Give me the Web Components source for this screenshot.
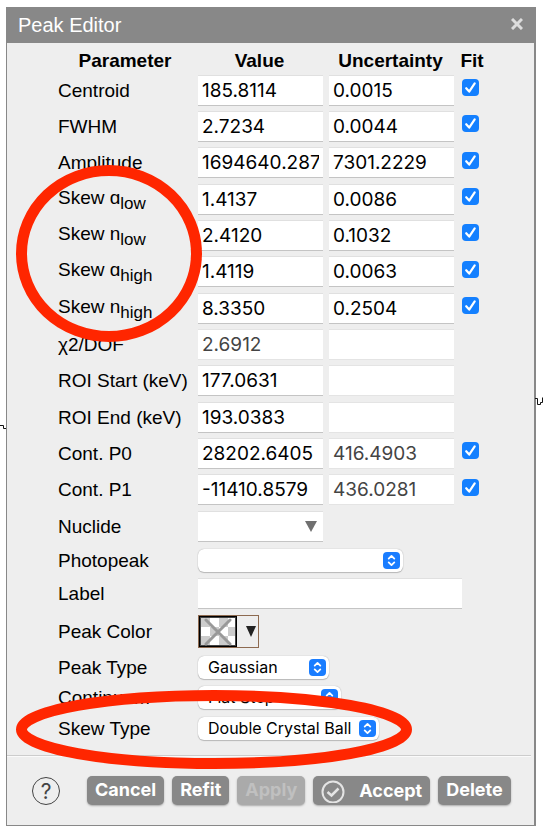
<!DOCTYPE html>
<html lang="en">
<head>
<meta charset="utf-8">
<title>Peak Editor</title>
<style>
  html, body { margin: 0; background: #fff; }
  body { font-family: "Liberation Sans", Arial, sans-serif; font-size: 19px; line-height: 24px; color: #000; }
</style>
</head>
<body>
<peak-page>
  <peak-window heading="Peak Editor">
    <peak-parameters></peak-parameters>
    <peak-combo label="Nuclide"></peak-combo>
    <peak-choice label="Photopeak" value="" style="--w:205px;--h:32px"></peak-choice>
    <peak-text label="Label"></peak-text>
    <peak-color label="Peak Color"></peak-color>
    <peak-choice label="Peak Type" value="Gaussian" style="--w:131px;--h:30px"></peak-choice>
    <peak-choice label="Continuum" value="Flat Step" style="--w:143px;--h:30px"></peak-choice>
    <peak-choice label="Skew Type" value="Double Crystal Ball" style="--w:181px;--h:32px"></peak-choice>
    <peak-actions slot="footer"></peak-actions>
  </peak-window>
</peak-page>

<script>
const define = (name, html, setup) => {
  const template = document.createElement('template');
  template.innerHTML = '<style>*{box-sizing:border-box}</style>' + html;
  customElements.define(name, class extends HTMLElement {
    constructor() {
      super();
      this.attachShadow({ mode: 'open' });
    }
    connectedCallback() {
      if (this.shadowRoot.childNodes.length) return;
      this.shadowRoot.append(template.content.cloneNode(true));
      if (setup) setup(this, this.shadowRoot);
    }
  });
};

const fieldCss = `
  .field { width: 100%; height: 31px; margin: 0; padding: 0 4px; display: block;
    border: 0; border-top: 1px solid #e0e0e0; border-bottom: 1px solid #c4c4c4; border-radius: 0;
    background: #fff; color: #000; font: 19px/26px Inter, "Liberation Sans", sans-serif; outline: none; }
  .field:focus-visible { box-shadow: 0 0 0 2px #1a7dff66; }
`;
const rowCss = `
  :host { display: grid; grid-template-columns: 140px minmax(0, 1fr); align-items: center; min-height: var(--h, 36px); }
  label { white-space: nowrap; padding-top: 1px; }
`;

/* Page: the spectrum trace behind the dialog, and the highlight rings over it */
define('peak-page', `
<style>
  :host { display: block; position: relative; padding: 7px 7px 9px 6px; }
  svg { position: absolute; pointer-events: none; overflow: visible; fill: none; }
  .left { left: 0; top: 420px; }
  .right { right: 0; top: 394px; }
  .trace { stroke: #111; stroke-width: 1; }
  .rings { left: 0; top: 0; stroke: #ff2600; stroke-width: 11; }
</style>
<svg class="trace left" width="7" height="12"><path d="M0 5.5H3.5V8.5H6"/></svg>
<svg class="trace right" width="8" height="14"><path d="M0 4.5H2.5V10.5H5.5V8.5H7.5V3.500"/></svg>
<slot></slot>
<svg class="rings" width="420" height="780" aria-hidden="true">
  <ellipse cx="109" cy="253.5" rx="87.5" ry="83"/>
  <ellipse cx="214" cy="729.5" rx="192.5" ry="34"/>
</svg>`);

define('peak-window', `
<style>
  :host { display: block; background: #eee; border: 1px solid #888; border-right-width: 2px; border-top: 0; }
  header { display: flex; align-items: center; justify-content: space-between; height: 36px;
    padding: 0 9px 2px 11px; background: #888; color: #fff; }
  h1 { margin: 0; padding-top: 2px; font-size: 20px; line-height: 24px; font-weight: 400; }
  button { border: 0; padding: 2px; background: none; display: flex; }
  svg { stroke: #ddd; stroke-width: 3; fill: none; }
  main { padding: 5px 50px 11px 51px; }
  footer { margin-right: 3px; border-top: 1px solid #ccc; box-shadow: inset 0 1px #fafafa; padding: 20px 16px 20px 25px; }
</style>
<header><h1></h1><button aria-label="Close"><svg width="12" height="12"><path d="M1 1L11 11M11 1L1 11"/></svg></button></header>
<main><slot></slot></main>
<footer><slot name="footer"></slot></footer>`,
(host, root) => { root.querySelector('h1').textContent = host.getAttribute('heading'); });

/* Fit parameters: [label, subscript, value, uncertainty, fitted, read-only columns] */
const parameters = [
  ['Centroid', '', '185.8114', '0.0015', true, ''],
  ['FWHM', '', '2.7234', '0.0044', true, ''],
  ['Amplitude', '', '1694640.2874', '7301.2229', true, ''],
  ['Skew ɑ', 'low', '1.4137', '0.0086', true, ''],
  ['Skew n', 'low', '2.4120', '0.1032', true, ''],
  ['Skew ɑ', 'high', '1.4119', '0.0063', true, ''],
  ['Skew n', 'high', '8.3350', '0.2504', true, ''],
  ['χ2/DOF', '', '2.6912', '', false, 'vu'],
  ['ROI Start (keV)', '', '177.0631', '', false, 'u'],
  ['ROI End (keV)', '', '193.0383', '', false, 'u'],
  ['Cont. P0', '', '28202.6405', '416.4903', true, 'u'],
  ['Cont. P1', '', '-11410.8579', '436.0281', true, 'u'],
];

define('peak-parameters', `
<style>
  ${fieldCss}
  :host { display: block; }
  table { width: 100%; table-layout: fixed; border-collapse: collapse; }
  th, td { padding: 0 6px 0 0; text-align: left; vertical-align: middle; font-weight: 400; white-space: nowrap; }
  tbody th { padding-top: 1px; }
  tbody .skew th { padding: 0 6px 3px 0; }
  thead th { height: 24px; padding: 1px 8px 0 0; line-height: 23px; font-weight: 700; text-align: center; }
  thead th:first-child { padding: 1px 6px 0 0; }
  thead th:last-child, td:last-child { padding-right: 0; }
  tbody tr { height: 36px; }
  tbody tr:nth-child(3n) { height: 37px; }
  .name { width: 140px; }
  .fit { width: 24px; }
  sub { font-size: 17px; line-height: 0; vertical-align: -5px; }
  .field[readonly] { color: #444; border-color: #e4e4e4; }
  .check { appearance: none; display: block; width: 17px; height: 17px; margin: 0 0 5px 2px; border-radius: 4px;
    background: #1480ff url('data:image/svg+xml,<svg xmlns="http://www.w3.org/2000/svg" viewBox="0 0 17 17"><path d="M4.200 9.200L7.200 12.600L12.700 4.300" fill="none" stroke="white" stroke-width="2.200" stroke-linecap="round" stroke-linejoin="round"/></svg>'); }
  .check:not(:checked) { background: #fff; border: 1px solid #bbb; }
</style>
<table>
  <colgroup><col class="name"><col><col><col class="fit"></colgroup>
  <thead><tr><th>Parameter</th><th>Value</th><th>Uncertainty</th><th>Fit</th></tr></thead>
  <tbody></tbody>
</table>`,
(host, root) => {
  root.querySelector('tbody').innerHTML = parameters.map(([name, sub, value, error, fit, locked], i) => `
    <tr class="${sub ? 'skew' : ''}">
      <th scope="row"><label for="v${i}">${name}${sub ? `<sub>${sub}</sub>` : ''}</label></th>
      <td><input class="field" id="v${i}" value="${value}" ${locked.includes('v') ? 'readonly' : ''}></td>
      <td><input class="field" aria-label="${name}${sub} uncertainty" value="${error}" ${locked.includes('u') ? 'readonly' : ''}></td>
      <td>${fit ? `<input class="check" type="checkbox" checked aria-label="Fit ${name}${sub}">` : ''}</td>
    </tr>`).join('');
});

const nameLabel = (host, root) => { root.querySelector('label').textContent = host.getAttribute('label'); };

define('peak-combo', `
<style>
  ${fieldCss}${rowCss}
  .box { display: grid; width: 125px; align-items: center; }
  .box > * { grid-area: 1 / 1; }
  svg { justify-self: end; margin-right: 6px; fill: #707070; }
</style>
<label for="c"></label>
<div class="box"><input class="field" id="c"><svg width="12" height="11"><path d="M0 0H12L6 11Z"/></svg></div>`, nameLabel);

define('peak-text', `
<style>
  ${fieldCss}${rowCss}
  :host { --h: 34px; }
  .field { max-width: 264px; }
</style>
<label for="t"></label><input class="field" id="t">`, nameLabel);

define('peak-choice', `
<style>
  ${rowCss}
  select { appearance: none; width: var(--w); height: 23px; margin: 0; padding: 0 24px 0 10px; border: 0; border-radius: 6px;
    box-shadow: 0 0 1px #999, 0 1px 1px #bbb; color: #000; font: 16px/22px Inter, "Liberation Sans", sans-serif;
    background: #fff url('data:image/svg+xml,<svg xmlns="http://www.w3.org/2000/svg" width="17" height="17"><rect width="17" height="17" rx="4" fill="%231a7dff"/><path d="M5.700 6.600L8.500 3.900L11.300 6.600M5.700 10.400L8.500 13.100L11.300 10.400" fill="none" stroke="white" stroke-width="1.800" stroke-linecap="round" stroke-linejoin="round"/></svg>') no-repeat right 3px center; }
</style>
<label for="s"></label><select id="s"><option></option></select>`,
(host, root) => {
  nameLabel(host, root);
  root.querySelector('option').textContent = host.getAttribute('value');
});

define('peak-color', `
<style>
  ${rowCss}
  :host { --h: 42px; }
  button { display: flex; align-items: center; width: 61px; height: 33px; padding: 0; border: 1px solid #8d6a50; background: #eee; }
  .swatch { display: block; width: 38px; height: 31px; border: 1px solid #000; box-shadow: inset 0 0 0 1px #444;
    background: conic-gradient(#fff 25%, #ccc 0 50%, #fff 0 75%, #ccc 0) 1px 1px / 18px 18px; }
  svg { display: block; }
  .arrow { margin-left: 9px; fill: #222; }
</style>
<label for="k"></label>
<button id="k"><span class="swatch"><svg width="36" height="29"><path d="M6 3L30 27M30 3L6 27" stroke="#999" stroke-width="3" stroke-linecap="round"/></svg></span><svg class="arrow" width="10" height="11"><path d="M0 0H10L5 11Z"/></svg></button>`, nameLabel);

define('peak-actions', `
<style>
  :host { display: flex; align-items: center; }
  button { height: 29px; margin: 0 8px 0 0; padding: 0 8px 2px; border: 0; border-radius: 5px; background: #888; color: #fff;
    box-shadow: 0 1px 2px #aaa; font: 700 18px/26px Inter, "Liberation Sans", sans-serif; white-space: nowrap; }
  button:disabled { background: #aaa; color: #c0c0c0; }
  .help { width: 28px; height: 28px; padding: 0; margin-right: 27px; background: none; box-shadow: none; }
  .help span { display: block; border: 1px solid #444; border-radius: 50%; width: 28px; height: 28px; font: 21px/27px Inter, sans-serif; color: #444; }
  .accept { display: flex; align-items: center; justify-content: space-between; gap: 14px; padding: 2px 8px; }
  svg { fill: none; stroke: #e4e4e4; stroke-width: 2; }
</style>
<button class="help" aria-label="Help"><span>?</span></button>
<button>Cancel</button><button>Refit</button><button disabled>Apply</button>
<button class="accept"><svg width="24" height="24"><circle cx="12" cy="13" r="10.500"/><path d="M6.500 13L10.500 16.500L17.500 9.500" stroke-width="2.500"/></svg>Accept</button>
<button>Delete</button>`);
</script>
</body>
</html>
